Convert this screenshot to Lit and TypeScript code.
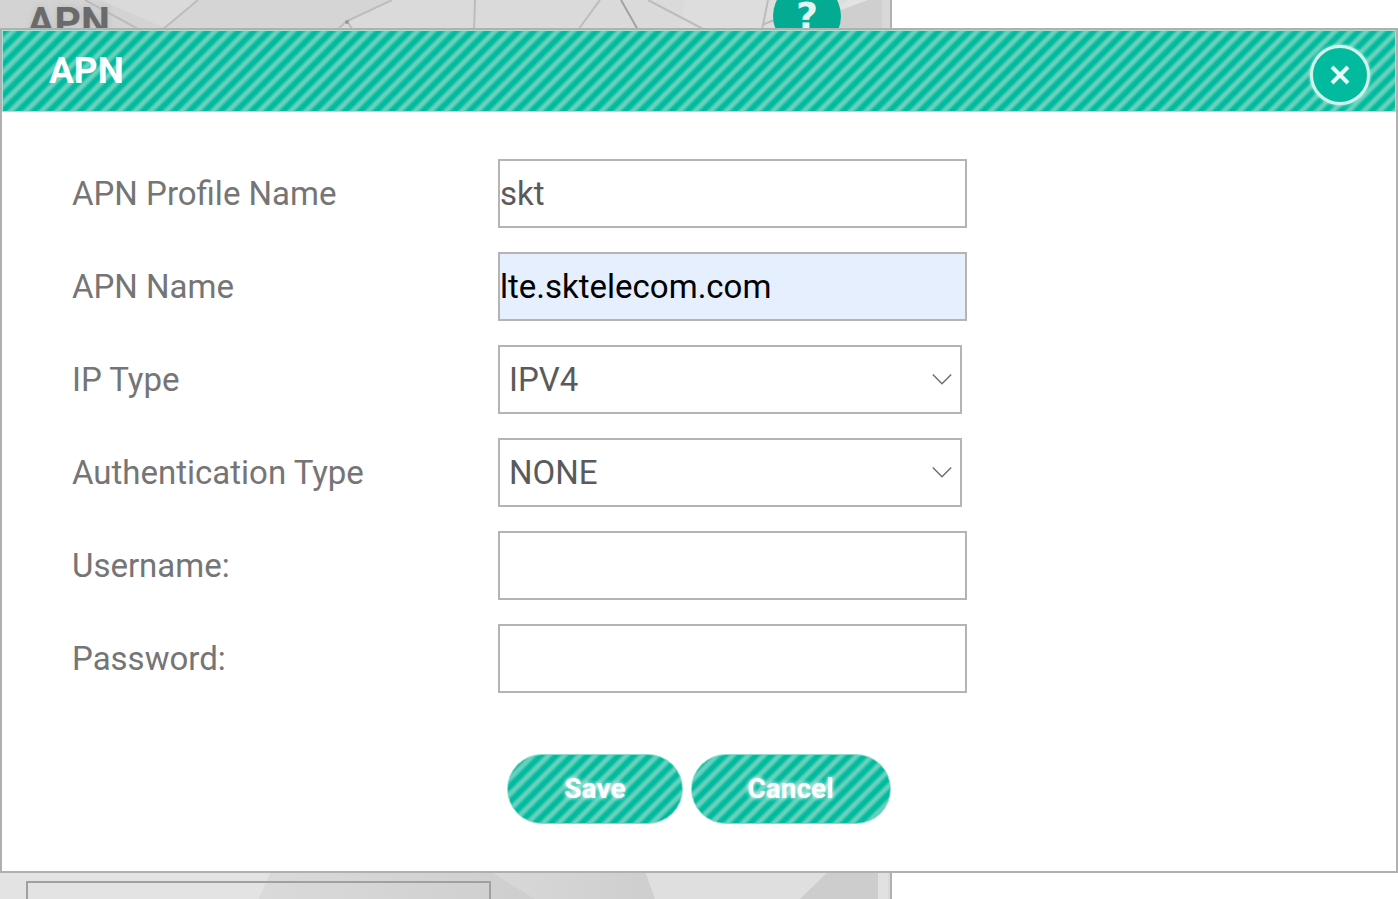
import { LitElement, html, css } from "lit";
import { customElement, state } from "lit/decorators.js";

@customElement("app-root")
export class AppRoot extends LitElement {
  @state() private open = true;

  static styles = css`
    :host {
      display: block;
      position: relative;
      height: 100vh;
      overflow: hidden;
      background: #fff;
      font-family: Roboto, sans-serif;
      color: #757575;
      --stripes: repeating-linear-gradient(
        135deg,
        #02bb9f 0px,
        #02bb9f 3px,
        #66d1bc 6px,
        #66d1bc 8px,
        #02bb9f 11px
      );
    }
    * {
      box-sizing: border-box;
    }
    .page {
      position: relative;
      display: flex;
      flex-direction: column;
      justify-content: space-between;
      width: 892px;
      height: 100%;
      border-right: 2px solid #b0b0b0;
      background: #dadada;
      overflow: hidden;
    }
    .backdrop {
      position: absolute;
      inset: 0;
      width: 100%;
      height: 100%;
    }
    .page-head {
      position: relative;
      display: flex;
      justify-content: space-between;
      padding: 0 49px 0 27px;
    }
    .page-title {
      margin: 0;
      font-size: 41px;
      line-height: 44px;
      font-weight: 700;
      color: #6a6a6a;
      text-shadow: 0 0 6px #bbb;
    }
    .help {
      width: 68px;
      height: 68px;
      margin-top: -18px;
      padding: 0;
      border: 0;
      border-radius: 50%;
      background: #02ab91;
      color: #e4f4f1;
      font: 700 38px/68px "DejaVu Sans", sans-serif;
    }
    .page-field {
      position: relative;
      width: 465px;
      height: 70px;
      margin: 0 0 -52px 26px;
      border: 2px solid #a0a0a0;
      background: transparent;
    }
    .dialog {
      position: absolute;
      inset: 28px 0 auto;
      border: 2px solid #b0b0b0;
      background: #fff;
    }
    .bar {
      display: flex;
      align-items: center;
      justify-content: space-between;
      height: 82px;
      padding: 0 25px 0 46px;
      border: 1px solid #a5e3d7;
      background: var(--stripes);
    }
    h2 {
      margin: 0;
      font-size: 37px;
      line-height: 44px;
      font-weight: 700;
      color: #fff;
    }
    .close {
      display: grid;
      place-items: center;
      width: 60px;
      height: 60px;
      margin-top: 8px;
      padding: 0;
      border: 3px solid #d2f3ec;
      border-radius: 50%;
      background: #02bb9f;
      box-shadow: 0 0 3px #d2f3ec;
    }
    form {
      display: flex;
      flex-direction: column;
      gap: 24px;
      padding: 47px 70px;
    }
    .row {
      display: grid;
      grid-template-columns: 426px 1fr;
      align-items: center;
    }
    label,
    .control {
      font-size: 33px;
      line-height: 40px;
    }
    .control {
      width: 469px;
      height: 69px;
      margin: 0;
      padding: 0;
      border: 2px solid #b4b4b4;
      border-radius: 0;
      background: #fff;
      font-family: inherit;
      color: #5a5a5a;
      outline: 0;
    }
    .filled {
      background: #e6effe;
      color: #000;
    }
    .select {
      position: relative;
      width: 464px;
    }
    select.control {
      display: block;
      width: 100%;
      padding: 0 9px;
      appearance: none;
    }
    .chevron {
      position: absolute;
      right: 10px;
      top: 28px;
      pointer-events: none;
    }
    .actions {
      display: flex;
      justify-content: center;
      gap: 8px;
      padding-top: 37px;
    }
    .pill {
      height: 70px;
      padding: 0 56px;
      border: 1px solid #8bdccd;
      border-radius: 35px;
      background: var(--stripes);
      color: #fff;
      font: 700 28px/40px Roboto, sans-serif;
      text-shadow: 0 0 4px #fff;
    }
  `;

  private close = () => {
    this.open = false;
  };

  private submit = (e: Event) => {
    e.preventDefault();
    this.close();
  };

  private input(id: string, label: string, value = "", type = "text", extra = "") {
    return html`<div class="row">
      <label for=${id}>${label}</label>
      <input class="control ${extra}" id=${id} type=${type} .value=${value} />
    </div>`;
  }

  private select(id: string, label: string, options: string[]) {
    return html`<div class="row">
      <label for=${id}>${label}</label>
      <div class="select">
        <select class="control" id=${id}>
          ${options.map((o) => html`<option>${o}</option>`)}
        </select>
        <svg class="chevron" width="20" height="13" viewBox="0 0 20 13" fill="none" stroke="#707070" stroke-width="1.5" aria-hidden="true">
          <path d="M.8 1.5 10 10.7 19.2 1.5" />
        </svg>
      </div>
    </div>`;
  }

  private backdrop() {
    return html`<svg class="backdrop" viewBox="0 0 890 899" preserveAspectRatio="none" aria-hidden="true">
      <defs>
        <linearGradient id="shade"><stop stop-color="#dadada" /><stop offset="1" stop-color="#cecece" /></linearGradient>
      </defs>
      <path fill="#d3d3d3" d="M0 0h100l65 28H0z" />
      <path fill="#d5d5d5" d="M198 0h190l-50 28H164z" />
      <path fill="#dddddd" d="M685 0h205v28H680z" />
      <path fill="#e3e3e3" d="M848 0h20l-38 14z" />
      <path fill="#cfcfcf" d="M868 0h14v40h-57V16z" />
      <path fill="#d8d8d8" d="M882 0h8v40h-8z" />
      <g fill="none" stroke="#bcbcbc" stroke-width="2">
        <path d="M85 0 140 30M198 0l-36 30M392 0 347 21l-8 7M347 21l5 8M475 0l-1 30M600 0l-22 30M648 0l57 30M768 0l-6 30M762 25l12-5" />
        <path stroke="#a2a2a2" d="M621 0l17 30" />
      </g>
      <circle cx="347" cy="22" r="2" fill="#999" />
      <path fill="#e3e3e3" d="M0 860h276l-17 39H0z" />
      <path fill="url(#shade)" d="M276 860h220l40 39H259z" />
      <path fill="url(#shade)" d="M465 860h177l13 39H535l-44-27z" />
      <path fill="#dfdfdf" d="M641 860h200l-41 39H655z" />
      <path fill="#cdcdcd" d="M840 860h38v39h-78z" />
      <path fill="#e1e1e1" d="M878 860h10v39h-10z" />
    </svg>`;
  }

  render() {
    return html`
      <main class="page">
        ${this.backdrop()}
        <header class="page-head">
          <h1 class="page-title">APN</h1>
          <button class="help" type="button">?</button>
        </header>
        <input class="page-field" aria-label="Profile" />
      </main>
      ${this.open
        ? html`<section class="dialog" role="dialog" aria-labelledby="dialog-title">
            <header class="bar">
              <h2 id="dialog-title">APN</h2>
              <button class="close" type="button" aria-label="Close" @click=${this.close}>
                <svg width="20" height="20" viewBox="0 0 20 20" fill="none" stroke="#e6faf6" stroke-width="4" aria-hidden="true">
                  <path d="M2 2l16 16M18 2 2 18" />
                </svg>
              </button>
            </header>
            <form @submit=${this.submit}>
              ${this.input("profile", "APN Profile Name", "skt")}
              ${this.input("apn", "APN Name", "lte.sktelecom.com", "text", "filled")}
              ${this.select("ip", "IP Type", ["IPV4", "IPV6", "IPV4V6"])}
              ${this.select("auth", "Authentication Type", ["NONE", "PAP", "CHAP"])}
              ${this.input("user", "Username:")}
              ${this.input("pass", "Password:", "", "password")}
              <div class="actions">
                <button class="pill" type="submit">Save</button>
                <button class="pill" type="button" @click=${this.close}>Cancel</button>
              </div>
            </form>
          </section>`
        : null}
    `;
  }
}
